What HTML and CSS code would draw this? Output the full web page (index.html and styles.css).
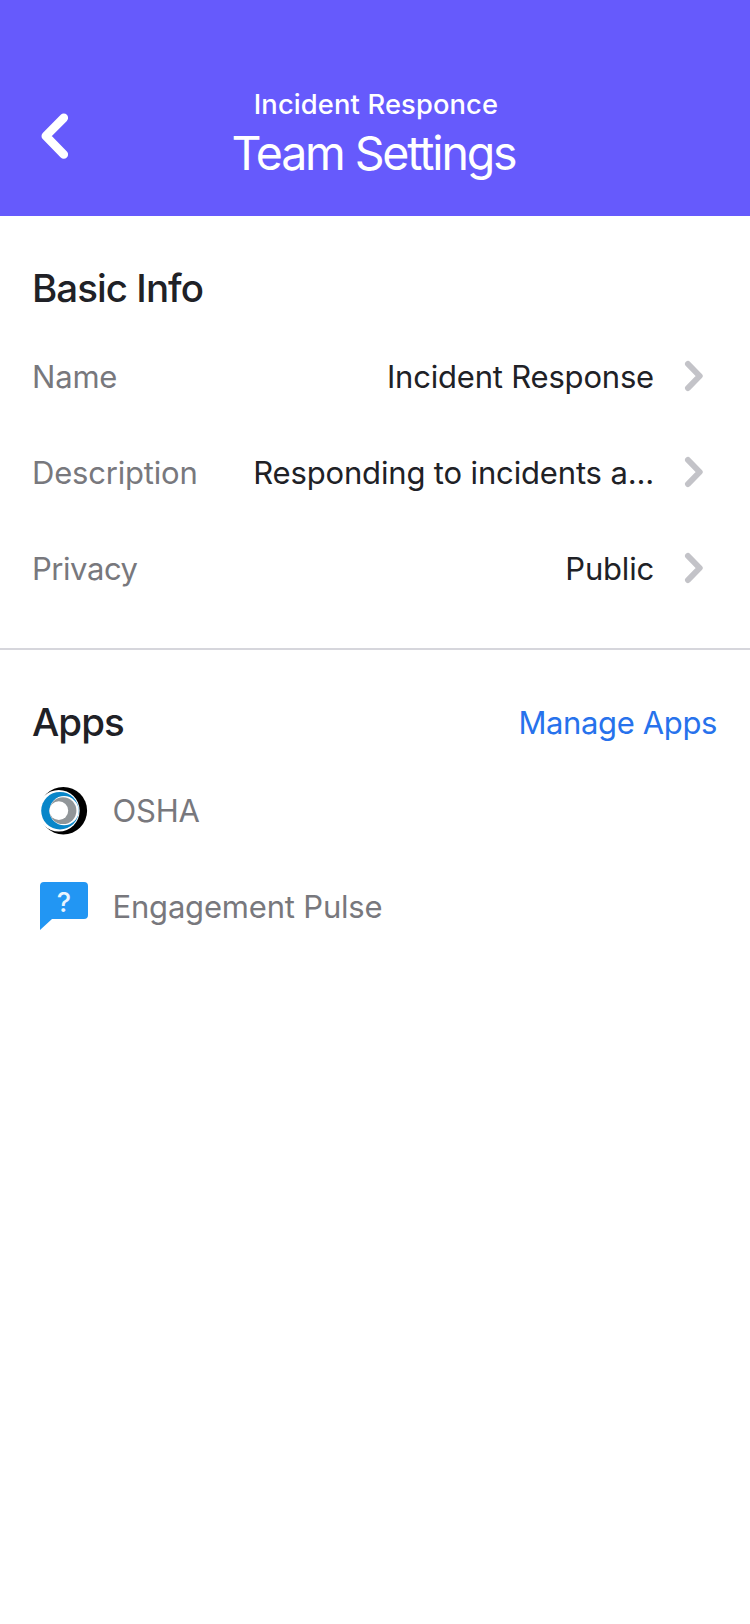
FILE: index.html
```html
<!DOCTYPE html>
<html lang="en">
<head>
<meta charset="utf-8">
<title>Team Settings</title>
<link rel="stylesheet" href="styles.css">
</head>
<body>
<header class="header">
  <button class="back" aria-label="Back"><svg width="28" height="46" viewBox="0 0 28 46"><path d="M23.8 4.9 5.8 23 23.8 41.4"/></svg></button>
  <div class="titles">
    <div class="subtitle">Incident Responce</div>
    <h1 class="title">Team Settings</h1>
  </div>
</header>
<main>
  <section class="section basic">
    <h2 class="heading">Basic Info</h2>
    <div class="row"><span class="label">Name</span><span class="value">Incident Response</span><svg class="chevron" width="20" height="32" viewBox="0 0 20 32"><path d="M4 4 15.7 16 4 28"/></svg></div>
    <div class="row"><span class="label">Description</span><span class="value description">Responding to incidents a...</span><svg class="chevron" width="20" height="32" viewBox="0 0 20 32"><path d="M4 4 15.7 16 4 28"/></svg></div>
    <div class="row"><span class="label privacy">Privacy</span><span class="value">Public</span><svg class="chevron" width="20" height="32" viewBox="0 0 20 32"><path d="M4 4 15.7 16 4 28"/></svg></div>
  </section>
  <section class="section apps">
    <div class="apps-head"><h2 class="heading">Apps</h2><a class="manage">Manage Apps</a></div>
    <div class="row app">
      <svg class="icon" width="48" height="48" viewBox="0 0 48 48">
        <circle cx="23.3" cy="24.7" r="23.8" fill="#000"/>
        <circle cx="18.8" cy="24.7" r="20.8" fill="#fff"/>
        <circle cx="20" cy="24.7" r="18.8" fill="#0886c9"/>
        <circle cx="24.1" cy="24.7" r="14.6" fill="#fff"/>
        <circle cx="23" cy="24.7" r="13.4" fill="#919699"/>
        <circle cx="18.8" cy="24.7" r="9.4" fill="#fff"/>
      </svg>
      <span class="label">OSHA</span>
    </div>
    <div class="row app">
      <svg class="icon" width="48" height="48" viewBox="0 0 48 48">
        <path d="M4 0H44a4 4 0 0 1 4 4V33a4 4 0 0 1-4 4H12L0 48V4a4 4 0 0 1 4-4Z" fill="#2296f3"/>
        <text class="mark" x="23.7" y="29.8" text-anchor="middle">?</text>
      </svg>
      <span class="label">Engagement Pulse</span>
    </div>
  </section>
</main>
</body>
</html>
```
FILE: styles.css
```css
* { box-sizing: border-box; }
body {
  margin: 0;
  min-height: 1624px;
  background: #fff;
  color: #202126;
  font-family: Inter, "Liberation Sans", sans-serif;
  font-size: 31px;
  letter-spacing: -0.19px;
}
h1, h2 { margin: 0; }
.header {
  display: grid;
  grid-template-columns: 112px 1fr 112px;
  height: 216px;
  padding-top: 80px;
  background: #665afc;
  color: #fff;
}
.back {
  display: flex;
  height: 112px;
  padding: 0 0 0 40px;
  align-items: center;
  border: 0;
  background: none;
}
.back path { fill: none; stroke: #fff; stroke-width: 8.6; stroke-linecap: round; stroke-linejoin: round; }
.titles { text-align: center; white-space: nowrap; }
.subtitle { height: 48px; padding: 1px 0 0 2px; line-height: 48px; font-size: 27.3px; font-weight: 450; letter-spacing: 0.14px; }
.title { height: 52px; padding-right: 3px; line-height: 51px; font-size: 46.5px; font-weight: 400; letter-spacing: -2.15px; }
.section { padding: 0 32px; }
.basic { padding-top: 32px; padding-bottom: 32px; border-bottom: 2px solid #d6d6dc; }
.basic .heading { height: 80px; line-height: 80px; }
.heading { font-size: 38.5px; font-weight: 500; letter-spacing: -0.95px; white-space: nowrap; }
.row { display: flex; height: 96px; align-items: center; white-space: nowrap; }
.label { color: #78787d; }
.privacy { letter-spacing: -0.45px; }
.value { margin-left: auto; }
.description { letter-spacing: -0.15px; }
.chevron { margin: 0 14px 0 30px; }
.chevron path { fill: none; stroke: #c3c3c8; stroke-width: 6; stroke-linecap: round; stroke-linejoin: round; }
.apps { padding-top: 32px; }
.apps-head { display: flex; height: 80px; align-items: center; justify-content: space-between; }
.manage { margin-right: 1px; padding-top: 1px; color: #2772ec; letter-spacing: -0.37px; }
.app .label { padding-left: 0.5px; }
.icon { margin: 0 24px 0 8px; overflow: visible; }
.mark { fill: #e9f4fe; font-size: 27px; font-weight: 500; }
```
